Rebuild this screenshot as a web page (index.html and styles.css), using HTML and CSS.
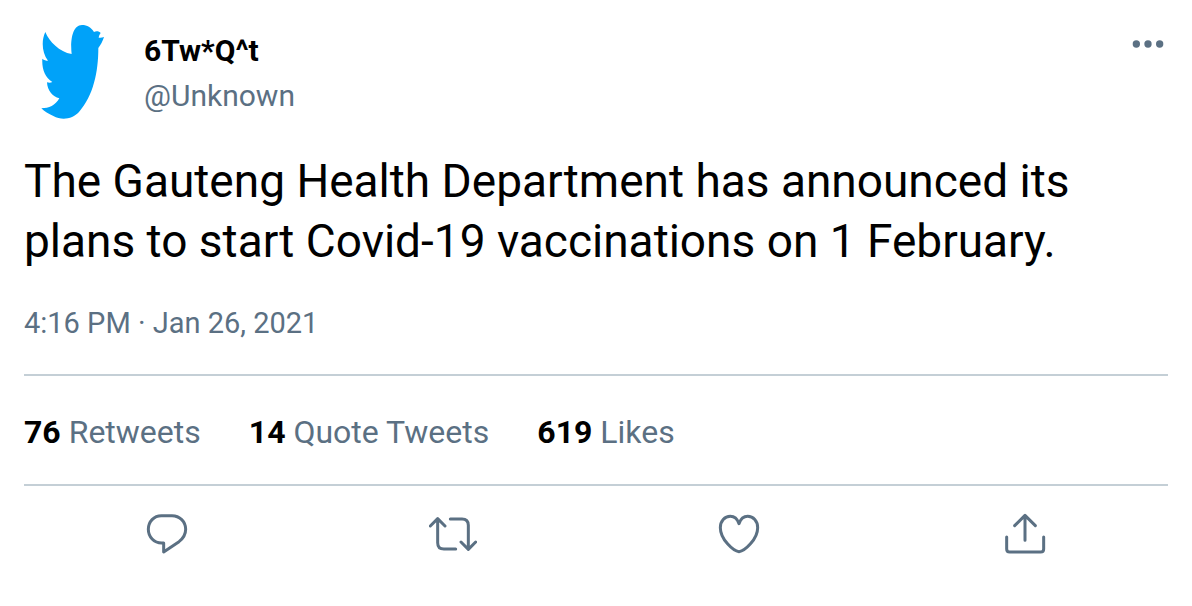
FILE: index.html
```
<!DOCTYPE html>
<html lang="en">
<head>
<meta charset="utf-8">
<meta name="viewport" content="width=device-width, initial-scale=1">
<title>Tweet</title>
<link rel="stylesheet" href="styles.css">
</head>
<body>
<article class="tweet">
  <header class="header">
    <svg class="avatar" viewBox="-18 27 288 288" aria-hidden="true">
      <path d="M46 51C58 80 88 111 125 117C121 85 124 31 156 30C172 30 183 37 192 51C199 47 208 49 212 54C209 58 207 62 206 68C212 69 217 68 222 66C218 79 212 90 205 99C205 171 190 242 147 291C128 312 96 317 70 303C56 297 43 289 34 280C57 280 76 271 88 250C68 246 52 226 51 202C57 204 62 204 67 201C45 187 35 161 37 131C42 135 48 137 54 137C35 113 34 75 46 51Z"/>
    </svg>
    <div class="author">
      <strong class="name">6Tw*Q^t</strong>
      <span class="handle">@Unknown</span>
    </div>
    <button class="more" type="button" aria-label="More">
      <svg viewBox="54 12 120 120" aria-hidden="true"><circle cx="79" cy="72" r="11"/><circle cx="114" cy="72" r="11"/><circle cx="149" cy="72" r="11"/></svg>
    </button>
  </header>
  <p class="text">The Gauteng Health Department has announced its plans to start Covid-19 vaccinations on 1 February.</p>
  <time class="date" datetime="2021-01-26T16:16">4:16 PM · Jan 26, 2021</time>
  <div class="stats">
    <span><strong>76</strong> Retweets</span>
    <span><strong>14</strong> Quote Tweets</span>
    <span><strong>619</strong> Likes</span>
  </div>
  <div class="actions">
    <button class="action" type="button" aria-label="Reply">
      <svg viewBox="39 30 144 144" aria-hidden="true"><path d="M94 47H126C149 47 167 65 167 88C167 104 159 116 147 125L101 156V129H95C72 129 55 111 55 88C55 65 72 47 94 47Z"/></svg>
    </button>
    <button class="action" type="button" aria-label="Retweet">
      <svg viewBox="42 30 144 144" aria-hidden="true"><path d="M46 78L68 56L90 78M68 57V128Q68 147 87 147H122M106 57H141Q160 57 160 76V147M138 126L160 148L182 126"/></svg>
    </button>
    <button class="action" type="button" aria-label="Like">
      <svg viewBox="45 30 144 144" aria-hidden="true"><path d="M117 155C100 153 61 118 61 83C61 63 74 49 91 49C103 49 112 57 117 71C122 57 131 49 143 49C160 49 173 63 173 83C173 118 134 153 117 155Z"/></svg>
    </button>
    <button class="action" type="button" aria-label="Share">
      <svg viewBox="48 30 144 144" aria-hidden="true"><path d="M89 77L120 46L151 77M120 47V121M65 111V147Q65 156 74 156H167Q176 156 176 147V111"/></svg>
    </button>
  </div>
</article>
</body>
</html>
```
FILE: styles.css
```
* { box-sizing: border-box; }
body {
  margin: 0;
  background: #fff;
  color: #000;
  font-family: Roboto, "Liberation Sans", sans-serif;
}
.tweet { padding: 24px; }
.header { display: flex; align-items: flex-start; gap: 24px; }
.avatar { width: 96px; height: 96px; flex: none; fill: #00a2f9; }
.author { flex: 1; display: flex; flex-direction: column; padding-top: 4px; }
.name, .handle { font-size: 30px; line-height: 45px; }
.name { font-weight: 700; }
.handle, .date, .stats { color: #5b7083; }
button { border: 0; padding: 0; background: none; color: #5b7083; cursor: pointer; }
.more svg { display: block; width: 40px; height: 40px; fill: currentColor; }
.text { margin: 31px 0 0; font-size: 46px; line-height: 60px; }
.date { display: block; margin-top: 32px; font-size: 29px; line-height: 40px; }
.stats {
  display: flex;
  flex-wrap: wrap;
  gap: 48px;
  margin-top: 31px;
  padding: 38px 0 34px;
  border: solid #c4cfd6;
  border-width: 2px 0;
  font-size: 32px;
  line-height: 36px;
}
.stats strong { color: #000; font-weight: 700; }
.actions { display: grid; grid-template-columns: repeat(4, 1fr); padding-top: 24px; }
.action { display: flex; justify-content: center; }
.action svg {
  width: 48px;
  height: 48px;
  fill: none;
  stroke: currentColor;
  stroke-width: 9;
  stroke-linecap: round;
  stroke-linejoin: round;
}
```
